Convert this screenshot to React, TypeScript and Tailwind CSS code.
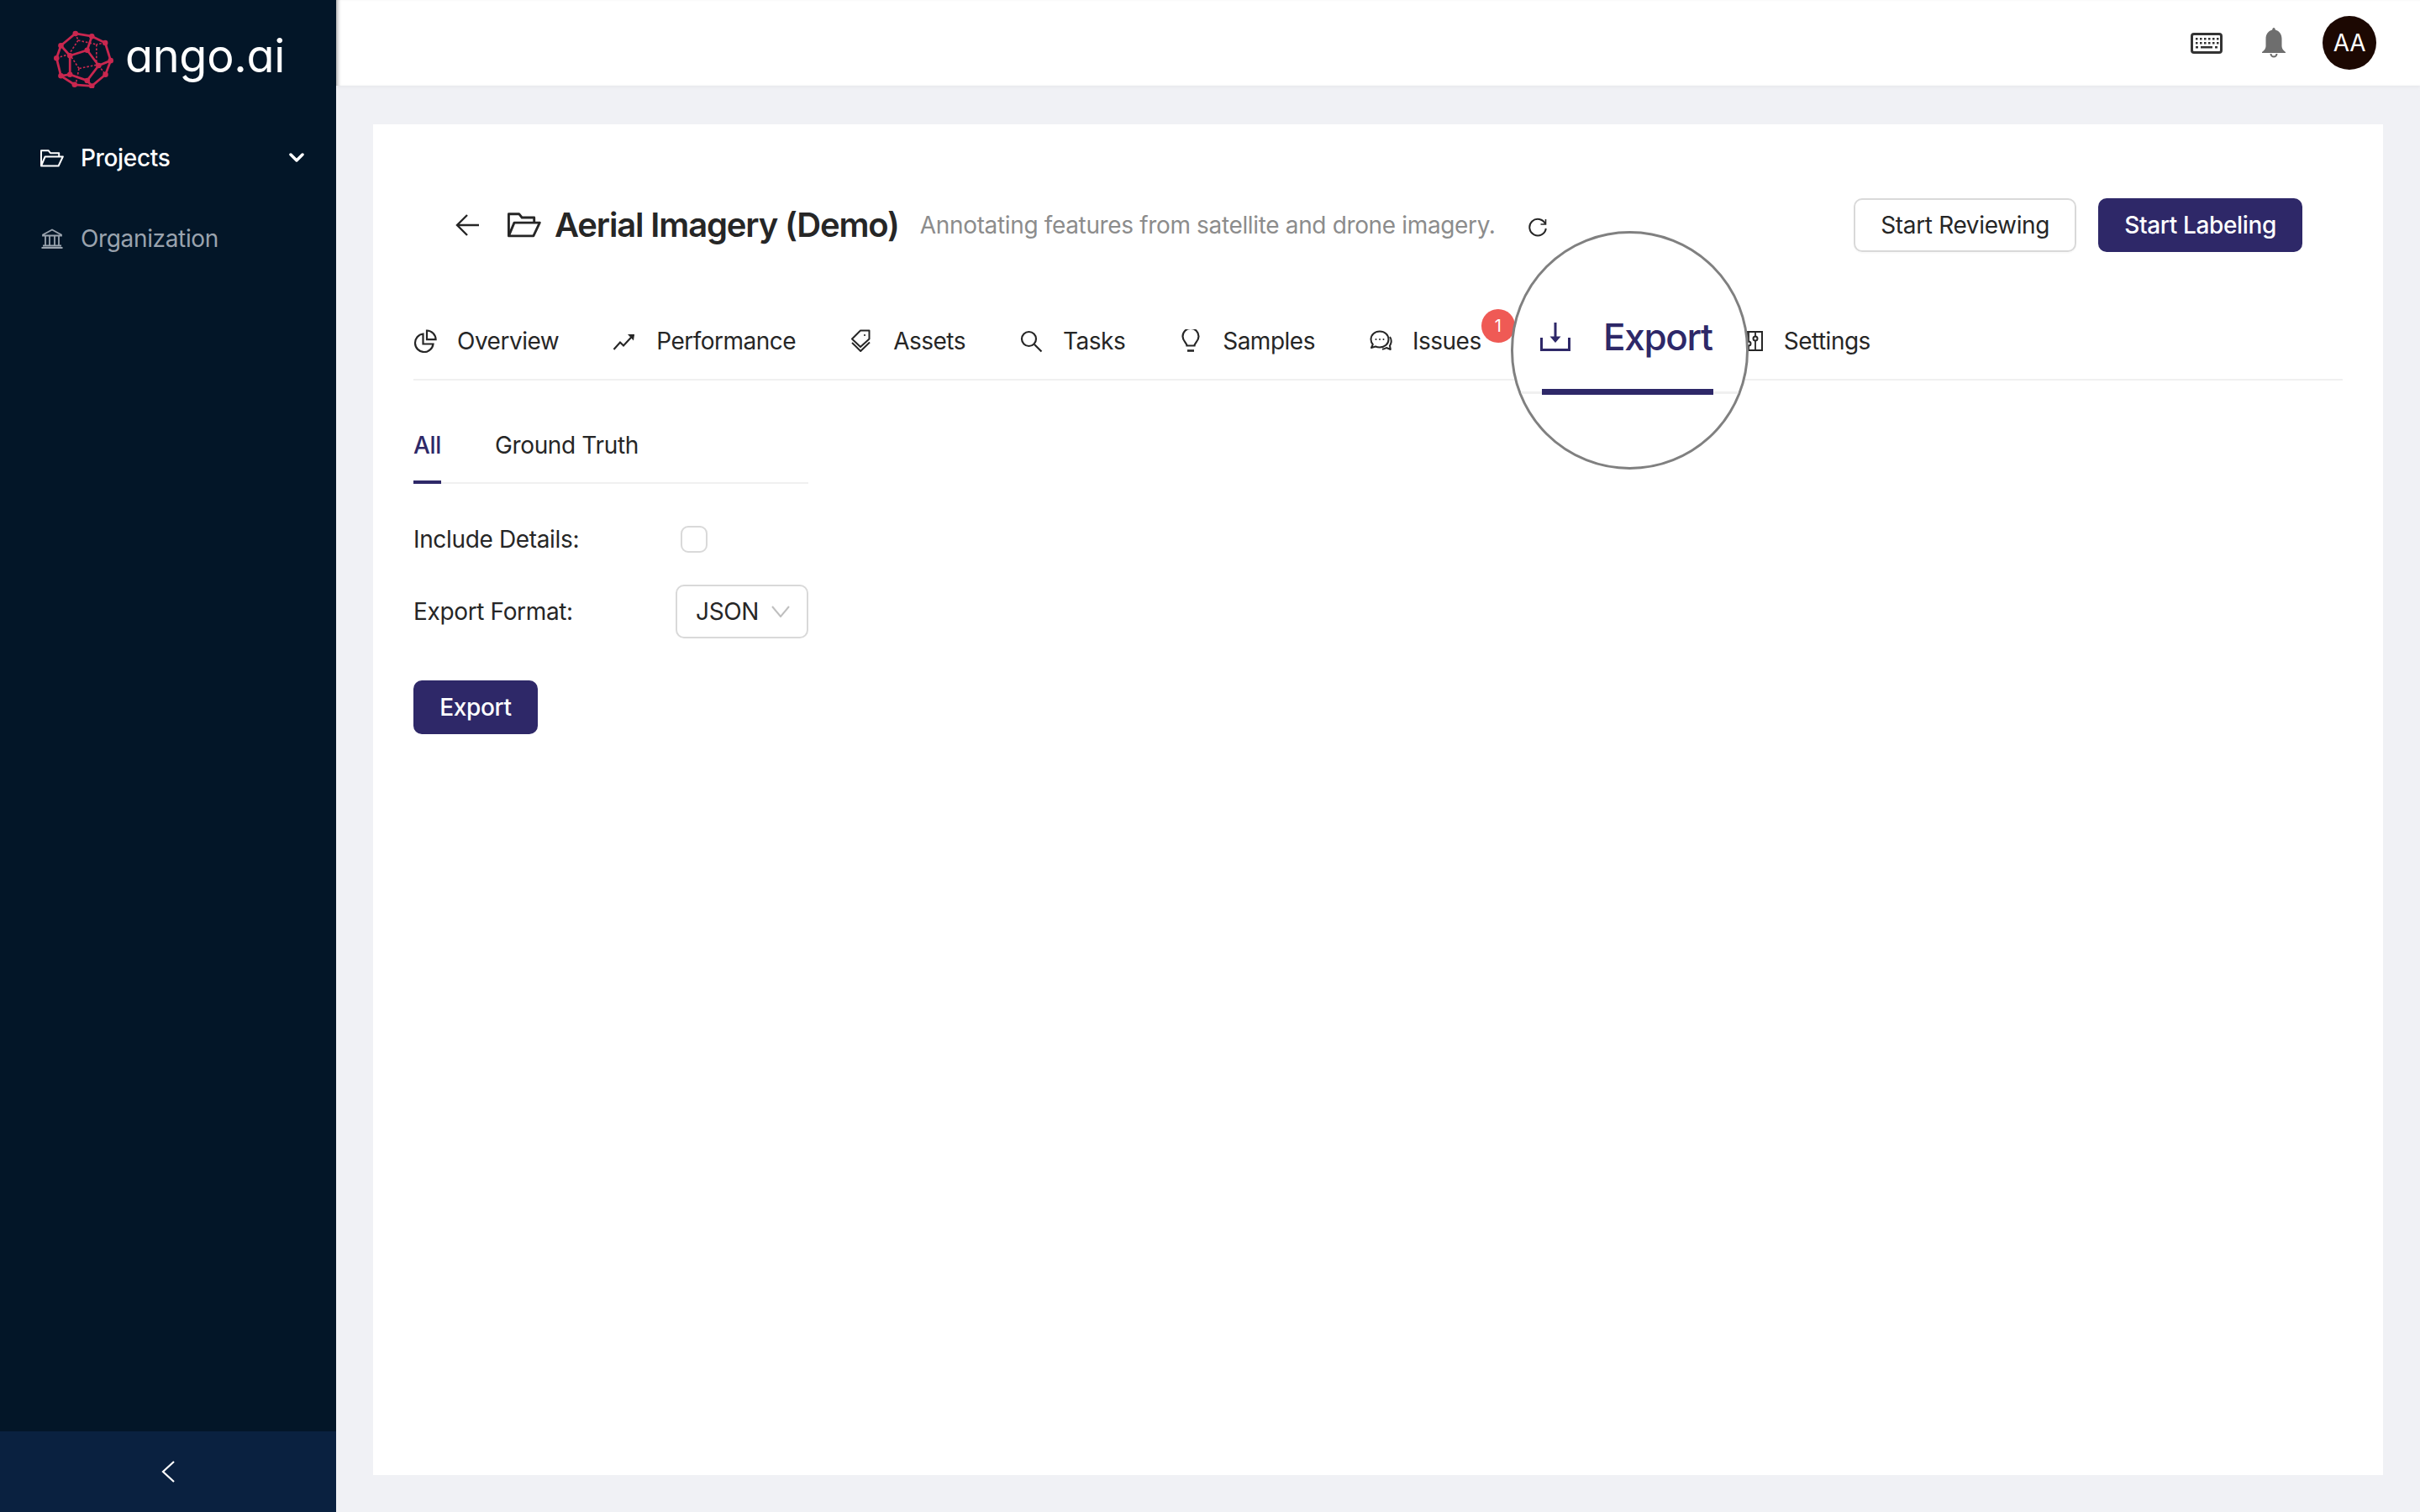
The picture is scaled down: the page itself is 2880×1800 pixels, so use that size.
import React from 'react';

const nodes: Record<string, [number, number]> = {
    a: [120, 57], b: [180, 67], c: [229, 91], d: [249, 156], e: [230, 207], f: [180, 249], g: [117, 244], h: [67, 212], i: [51, 147], j: [67, 101],
    k: [100, 138], l: [163, 118], m: [205, 174], n: [163, 229], o: [100, 207],
};
const solidEdges = ['ab', 'aj', 'bc', 'cd', 'de', 'ef', 'fg', 'gh', 'hi', 'ij', 'jk', 'bl', 'kl', 'lm', 'mn', 'no', 'ok', 'dm', 'fn', 'ho'];
const dashedEdges = [
    [130, 82, 197, 97], [197, 97, 197, 170], [197, 172, 133, 185], [133, 185, 105, 142], [130, 82, 100, 128],
    [120, 57, 130, 82], [229, 91, 197, 97], [51, 147, 98, 132], [133, 185, 122, 240], [205, 174, 230, 207],
];

const Logo = () => (
    <svg width="71" height="69" viewBox="42 45 216 212" fill="none" className="shrink-0">
        {dashedEdges.map((d, idx) => (
            <line key={idx} x1={d[0]} y1={d[1]} x2={d[2]} y2={d[3]} stroke="#c9274f" strokeWidth="5" strokeDasharray="8 6" />
        ))}
        {solidEdges.map((e) => (
            <line key={e} x1={nodes[e[0]][0]} y1={nodes[e[0]][1]} x2={nodes[e[1]][0]} y2={nodes[e[1]][1]} stroke="#c9274f" strokeWidth="8.500" />
        ))}
        {Object.keys(nodes).map((n) => (
            <circle key={n} cx={nodes[n][0]} cy={nodes[n][1]} r="10" fill="#c9274f" />
        ))}
    </svg>
);

const FolderOpenIcon = ({ width, height, strokeWidth, color }: { width: number; height: number; strokeWidth: number; color: string }) => (
    <svg width={width} height={height} viewBox="0 0 28 21" fill="none" stroke={color} strokeWidth={strokeWidth} strokeLinejoin="round" className="shrink-0">
        <path d="M1 19.5V1.200h8.600l2.400 3h10.200v4.300" />
        <path d="M1 19.500h20.600L26.800 8.500H5.600L1 19.500Z" />
    </svg>
);

const BankIcon = () => (
    <svg width="26" height="24" viewBox="0 0 26 24" fill="none" stroke="#9aa3ae" strokeWidth="1.800" className="shrink-0">
        <path d="M2 7.500 13 1.500l11 6v1H2v-1Z" />
        <path d="M5 9v11M10 9v11M16 9v11M21 9v11" />
        <path d="M2 20.500h22M0.500 23h25" />
    </svg>
);

const OverviewIcon = () => (
    <svg width="28" height="28" viewBox="0 0 28 28" fill="none" stroke="#262626" strokeWidth="2.200" className="shrink-0">
        <path d="M11.500 5.500a10.800 10.800 0 1 0 12 12H11.500V5.500Z" />
        <path d="M16 1.500a10.800 10.800 0 0 1 10.600 10.700H16V1.500Z" />
    </svg>
);

const PerformanceIcon = () => (
    <svg width="28" height="24" viewBox="0 0 28 24" fill="none" stroke="#262626" strokeWidth="2.200" className="shrink-0">
        <path d="M1.500 22 9 13.500l4 4L25 4.500" />
        <path d="m18 4 8 0-1 7.500z" fill="#262626" stroke="none" />
    </svg>
);

const AssetsIcon = () => (
    <svg width="28" height="28" viewBox="0 0 28 28" fill="none" stroke="#262626" strokeWidth="2" strokeLinejoin="round" className="shrink-0">
        <path d="M13 1.500h10.500v10L13 21 3 11.500 13 1.500Z" />
        <path d="M3 16l10.200 10L24 15.500" />
        <circle cx="18" cy="7" r="1.100" fill="#262626" stroke="none" />
    </svg>
);

const TasksIcon = () => (
    <svg width="28" height="28" viewBox="0 0 28 28" fill="none" stroke="#262626" strokeWidth="2.200" className="shrink-0">
        <circle cx="11.500" cy="11.500" r="8.500" />
        <path d="m18 18 8.500 8.500" />
    </svg>
);

const SamplesIcon = () => (
    <svg width="28" height="28" viewBox="0 0 28 28" fill="none" stroke="#262626" strokeWidth="2.200" className="shrink-0">
        <path d="M9.500 20c0-3-5-5.500-5-11a9.500 9.500 0 0 1 19 0c0 5.500-5 8-5 11h-9Z" transform="translate(0 -0.500)" />
        <path d="M10 25.500h8" strokeWidth="2.600" />
    </svg>
);

const IssuesIcon = () => (
    <svg width="28" height="28" viewBox="0 0 28 28" fill="none" stroke="#262626" strokeWidth="2" strokeLinejoin="round" className="shrink-0">
        <path d="M13 2.500c-6 0-10.500 4-10.500 9.500 0 2.500 1 4.500 2.300 6l-1.800 4 5-1.500c1.500.7 3.200 1 5 1 6 0 10.500-4 10.500-9.500S19 2.500 13 2.500Z" />
        <path d="M25 9c1.500 2 2 4 1.600 6.500-.3 1.800-1 3-1.600 4l.8 4.500-4.800-2c-1.500 1-3 1.500-5 1.700" />
        <circle cx="8.500" cy="12" r="1" fill="#262626" stroke="none" />
        <circle cx="13" cy="12" r="1" fill="#262626" stroke="none" />
        <circle cx="17.500" cy="12" r="1" fill="#262626" stroke="none" />
    </svg>
);

const SettingsIcon = () => (
    <svg width="28" height="28" viewBox="0 0 28 28" fill="none" stroke="#262626" strokeWidth="2" className="shrink-0">
        <rect x="8" y="3" width="18" height="22" />
        <path d="M10 4v22M18 4v22" strokeWidth="1.800" />
        <circle cx="10" cy="17" r="2.500" fill="#fff" />
        <circle cx="18" cy="11" r="2.500" fill="#fff" />
    </svg>
);

const KeyboardIcon = () => (
    <svg width="38" height="25" viewBox="0 0 38 25" fill="none" className="shrink-0">
        <rect x="1.500" y="1.500" width="35" height="22" rx="2.500" stroke="#333" strokeWidth="3" />
        <g fill="#333">
            {[6, 11, 16, 21, 26, 31].map((x) => <rect key={x} x={x} y="6" width="2.500" height="2.500" />)}
            {[6, 11, 16, 21, 26, 31].map((x) => <rect key={x} x={x} y="11" width="2.500" height="2.500" />)}
            <rect x="6" y="16" width="3" height="2.500" />
            <rect x="12" y="16" width="14" height="2.500" />
            <rect x="29" y="16" width="3" height="2.500" />
        </g>
    </svg>
);

const BellIcon = () => (
    <svg width="28" height="36" viewBox="0 0 28 36" className="shrink-0">
        <path fill="#6e6e6e" d="M14 0c1 0 1.700 1 1.800 2.500C21 4 23.500 8 23.500 13v9c0 3 2 5 4.500 7v1H0v-1c2.500-2 4.500-4 4.500-7v-9c0-5 2.500-9 7.700-10.500C12.300 1 13 0 14 0Z" />
        <path fill="none" stroke="#6e6e6e" strokeWidth="2" d="M10.500 31a3.500 3.500 0 0 0 7 0" />
    </svg>
);

const tabs = [
    { label: 'Overview', icon: <OverviewIcon /> },
    { label: 'Performance', icon: <PerformanceIcon /> },
    { label: 'Assets', icon: <AssetsIcon /> },
    { label: 'Tasks', icon: <TasksIcon /> },
    { label: 'Samples', icon: <SamplesIcon /> },
];

export default function App() {
    return (
        <div className="flex h-screen w-full bg-[#f0f1f5] font-[Inter,sans-serif] text-[28px] leading-[34px] tracking-[-0.35px] text-[#262626]">
            <aside className="flex w-[400px] shrink-0 flex-col bg-[#031628]">
                <div className="flex h-[102px] items-start gap-[14px] pl-[64px] pt-[36px]">
                    <Logo />
                    <span className="mt-[-4px] text-[54px] leading-[70px] font-normal tracking-[-0.3px] text-white [font-feature-settings:'cv11']">ango.ai</span>
                </div>
                <nav className="flex flex-1 flex-col gap-[62px] pt-[69px]">
                    <div className="flex items-center pl-[48px] pr-[38px] text-white">
                        <FolderOpenIcon width={28} height={21} strokeWidth={2} color="#ffffff" />
                        <span className="ml-[20px] font-medium">Projects</span>
                        <svg width="18" height="11" viewBox="0 0 18 11" fill="none" stroke="#fff" strokeWidth="3.500" strokeLinecap="round" strokeLinejoin="round" className="ml-auto -mt-[2px]">
                            <path d="m2 2 7 7 7-7" />
                        </svg>
                    </div>
                    <div className="flex items-center pl-[49px] text-[#9aa3ae]">
                        <BankIcon />
                        <span className="ml-[21px]">Organization</span>
                    </div>
                </nav>
                <div className="flex h-[96px] items-center justify-center bg-[#0a2140]">
                    <svg width="16" height="26" viewBox="0 0 16 26" fill="none" stroke="#fff" strokeWidth="2.200">
                        <path d="M15 1 2 13l13 12" />
                    </svg>
                </div>
            </aside>

            <main className="flex min-w-0 flex-1 flex-col">
                <header className="flex h-[102px] shrink-0 items-center justify-end bg-white pr-[52px] shadow-[inset_5px_0_5px_-4px_rgba(0,0,0,0.45),0_2px_4px_rgba(0,0,0,0.04)]">
                    <KeyboardIcon />
                    <div className="ml-[47px]"><BellIcon /></div>
                    <div className="ml-[44px] flex size-[64px] items-center justify-center rounded-full bg-[#1c0802] text-white">AA</div>
                </header>

                <div className="mx-[44px] mb-[44px] mt-[46px] flex-1 bg-white px-[48px] pt-[88px]">
                    {/* Title row */}
                    <div className="flex h-[64px] items-center pl-[50px] pr-[48px]">
                        <svg width="28" height="26" viewBox="0 0 28 26" fill="none" stroke="#262626" strokeWidth="2.400" className="shrink-0">
                            <path d="M14 1 2 13l12 12M2 13h26" />
                        </svg>
                        <div className="ml-[34px]"><FolderOpenIcon width={40} height={30} strokeWidth={2} color="#262626" /></div>
                        <h1 className="ml-[16px] text-[40px] leading-[48px] font-semibold tracking-[-1.15px]">Aerial Imagery (Demo)</h1>
                        <span className="ml-[25px] text-[#8c8c8c]">Annotating features from satellite and drone imagery.</span>
                        <svg width="24" height="24" viewBox="0 0 24 24" fill="none" stroke="#262626" strokeWidth="2" className="ml-[38px] mt-[3px] shrink-0">
                            <path d="M21 8.500A9.800 9.800 0 1 0 21.800 14" />
                            <path d="M21.500 3v6h-6" strokeWidth="1.600" />
                        </svg>
                        <button className="ml-auto rounded-[10px] border-2 border-[#d9d9d9] bg-white px-[30px] py-[13px] shadow-[0_2px_0_rgba(0,0,0,0.02)]">Start Reviewing</button>
                        <button className="ml-[26px] rounded-[10px] bg-[#2e2868] px-[31px] py-[15px] font-medium text-white">Start Labeling</button>
                    </div>

                    {/* Main tabs */}
                    <div className="relative mt-[64px] flex h-[89px] items-start border-b-2 border-[#f0f0f0] pt-[25px] tracking-[-0.5px]">
                        {tabs.map((tab) => (
                            <div key={tab.label} className="mr-[64px] flex items-center gap-[24px]">
                                <div className="flex w-[28px] justify-center">{tab.icon}</div>
                                <span>{tab.label}</span>
                            </div>
                        ))}
                        <div className="relative flex items-center gap-[24px]">
                            <IssuesIcon />
                            <span>Issues</span>
                            <div className="absolute left-full top-[-21px] flex size-[40px] items-center justify-center rounded-full bg-[#ef5a55] text-[20px] leading-none text-white">1</div>
                        </div>
                        <div className="ml-[308px] flex items-center gap-[24px]">
                            <SettingsIcon />
                            <span>Settings</span>
                        </div>

                        {/* Magnifier over the Export tab */}
                        <div className="absolute left-[1306px] top-[-89px] h-[284px] w-[283px] overflow-hidden rounded-full border-[3px] border-[#808080] bg-white pl-[32px] pt-[97px]">
                            <div className="absolute inset-x-0 top-[188px] h-[3px] bg-[#f0f0f0]" />
                            <div className="relative flex items-center gap-[39px] text-[#2e2868]">
                                <svg width="36" height="34" viewBox="0 0 36 34" fill="none" stroke="#2e2868" strokeWidth="3" className="shrink-0">
                                    <path d="M1.500 18v14.500h33V18" />
                                    <path d="M18 0v22" />
                                    <path d="M11.500 16.500h13L18 24z" fill="#2e2868" stroke="none" />
                                </svg>
                                <span className="text-[44px] leading-[52px] font-medium tracking-[-1.3px]">Export</span>
                            </div>
                            <div className="relative ml-[2px] mt-[36px] h-[7px] w-[204px] bg-[#2e2868]" />
                        </div>
                    </div>

                    {/* Export form */}
                    <div className="w-[470px]">
                        <div className="mt-[60px] flex border-b-2 border-[#f0f0f0]">
                            <div className="-mb-[2px] border-b-4 border-[#2e2868] pb-[25px] font-medium text-[#2e2868]">All</div>
                            <div className="ml-[64px]">Ground Truth</div>
                        </div>
                        <div className="mt-[49px] flex items-center">
                            <span className="w-[318px]">Include Details:</span>
                            <div className="size-[32px] rounded-[9px] border-2 border-[#d9d9d9] bg-white" />
                        </div>
                        <div className="mt-[37px] flex items-center">
                            <span className="w-[312px]">Export Format:</span>
                            <div className="flex h-[64px] w-[158px] items-center rounded-[10px] border-2 border-[#d9d9d9] pl-[22px]">
                                <span>JSON</span>
                                <svg width="22" height="14" viewBox="0 0 22 14" fill="none" stroke="#bfbfbf" strokeWidth="2" className="ml-[15px] shrink-0">
                                    <path d="m1 1 10 12L21 1" />
                                </svg>
                            </div>
                        </div>
                        <button className="mt-[50px] flex h-[64px] w-[148px] items-center justify-center rounded-[10px] bg-[#2e2868] font-medium text-white">Export</button>
                    </div>
                </div>
            </main>
        </div>
    );
}
